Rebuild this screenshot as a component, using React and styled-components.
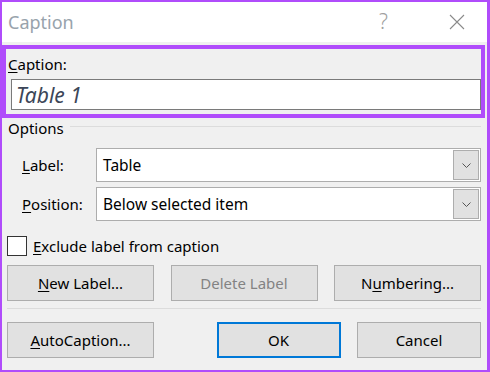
import React from 'react';
import styled, { createGlobalStyle } from 'styled-components';

const GlobalStyle = createGlobalStyle`
  html, body {
    margin: 0;
    padding: 0;
    background: #ffffff;
  }
  body {
    font-family: "Noto Sans", "Open Sans", sans-serif;
  }
`;

const Window = styled.div`
  width: 490px;
  height: 372px;
  box-sizing: border-box;
  border: 2px solid #b04cfb;
  border-right-width: 3px;
  background: #f0f0f0;
  display: flex;
  flex-direction: column;
  font-size: 15px;
  color: #000;
`;

const TitleBar = styled.div`
  height: 40px;
  background: #fff;
  display: flex;
  align-items: center;
  padding-left: 6px;
  flex-shrink: 0;
`;

const Title = styled.span`
  flex: 1;
  font-size: 18px;
  color: #98a3ac;
  margin-top: -1px;
`;

const HelpMark = styled.span`
  font-size: 21px;
  font-weight: 300;
  color: #a0a0a0;
  width: 14px;
  margin-right: 56px;
  margin-top: -2px;
`;

const CloseIcon = styled.svg`
  width: 16px;
  height: 16px;
  margin-right: 22px;
`;

const Highlight = styled.div`
  margin: 3px 2px 0 0;
  border: 4px solid #b04cfb;
  padding: 4px 0 4px 2px;
  display: flex;
  flex-direction: column;
  gap: 4px;
`;

const Access = styled.u`
  text-decoration: underline;
  text-underline-offset: 2px;
`;

const CaptionLabel = styled.div`
  height: 22px;
  line-height: 22px;
`;

const CaptionInput = styled.div`
  margin: 0 0 0 3px;
  height: 31px;
  box-sizing: border-box;
  border: 1px solid #7a7a7a;
  background: #fff;
  display: flex;
  align-items: center;
  padding-left: 4px;
  font-size: 21px;
  font-style: italic;
  color: #3c4658;
`;

const Body = styled.div`
  padding: 0 6px 0 5px;
  display: flex;
  flex-direction: column;
`;

const GroupHeader = styled.div`
  display: flex;
  align-items: center;
  gap: 6px;
  height: 20px;
  margin: 0 0 10px 1px;

  &::after {
    content: '';
    flex: 1;
    height: 1px;
    background: #dcdcdc;
    margin-top: -3px;
  }
`;

const FieldRow = styled.div`
  display: flex;
  align-items: center;
  height: ${p => p.$h}px;
  margin-bottom: ${p => p.$mb}px;
`;

const FieldLabel = styled.div`
  width: 74px;
  padding-left: 15px;
`;

const Select = styled.div`
  flex: 1;
  height: 100%;
  box-sizing: border-box;
  border: 1px solid #adadad;
  background: #fff;
  display: flex;
  align-items: center;
  padding: 1px 1px 1px 6px;
`;

const SelectText = styled.span`
  flex: 1;
  font-size: 15.5px;
`;

const DropButton = styled.div`
  width: 26px;
  height: 100%;
  box-sizing: border-box;
  border: 1px solid #adadad;
  background: #e1e1e1;
  display: flex;
  align-items: center;
  justify-content: center;
`;

const CheckRow = styled.label`
  display: flex;
  align-items: center;
  gap: 6px;
  height: 20px;
  margin: 15px 0 9px 0;
`;

const CheckBox = styled.span`
  width: 20px;
  height: 20px;
  box-sizing: border-box;
  border: 1px solid #333;
  background: #fff;
`;

const ButtonRow = styled.div`
  display: flex;
  justify-content: ${p => p.$justify || 'space-between'};
  gap: 16px;
`;

const Button = styled.div`
  width: ${p => p.$w}px;
  height: 36px;
  box-sizing: border-box;
  border: ${p => (p.$default ? '2px solid #0078d7' : '1px solid #adadad')};
  background: #e1e1e1;
  display: flex;
  align-items: center;
  justify-content: center;
  color: ${p => (p.$disabled ? '#838383' : '#000')};
  margin-right: ${p => p.$mr || 0}px;
`;

const Separator = styled.div`
  height: 1px;
  background: #dcdcdc;
  margin: 7px 0 13px 0;
`;

function Chevron() {
  return (
    <svg width="9" height="5" viewBox="0 0 9 5">
      <path d="M0.5 0.5 L4.5 4.5 L8.5 0.5" fill="none" stroke="#555" strokeWidth="1" />
    </svg>
  );
}

export default function App() {
  return (
    <>
      <GlobalStyle />
      <Window>
        <TitleBar>
          <Title>Caption</Title>
          <HelpMark>?</HelpMark>
          <CloseIcon viewBox="0 0 16 16">
            <path d="M1 1 L15 15 M15 1 L1 15" stroke="#8a8a8a" strokeWidth="1.1" fill="none" />
          </CloseIcon>
        </TitleBar>

        <Highlight>
          <CaptionLabel><Access>C</Access>aption:</CaptionLabel>
          <CaptionInput>Table 1</CaptionInput>
        </Highlight>

        <Body>
          <GroupHeader>Options</GroupHeader>

          <FieldRow $h={34} $mb={5}>
            <FieldLabel><Access>L</Access>abel:</FieldLabel>
            <Select>
              <SelectText>Table</SelectText>
              <DropButton><Chevron /></DropButton>
            </Select>
          </FieldRow>

          <FieldRow $h={34} $mb={0}>
            <FieldLabel><Access>P</Access>osition:</FieldLabel>
            <Select>
              <SelectText>Below selected item</SelectText>
              <DropButton><Chevron /></DropButton>
            </Select>
          </FieldRow>

          <CheckRow>
            <CheckBox />
            <span><Access>E</Access>xclude label from caption</span>
          </CheckRow>

          <ButtonRow>
            <Button $w={147}><Access>N</Access>ew Label...</Button>
            <Button $w={147} $disabled>Delete Label</Button>
            <Button $w={147}>N<Access>u</Access>mbering...</Button>
          </ButtonRow>

          <Separator />

          <ButtonRow>
            <Button $w={147} $mr={46}><Access>A</Access>utoCaption...</Button>
            <Button $w={124} $default>OK</Button>
            <Button $w={124}>Cancel</Button>
          </ButtonRow>
        </Body>
      </Window>
    </>
  );
}
